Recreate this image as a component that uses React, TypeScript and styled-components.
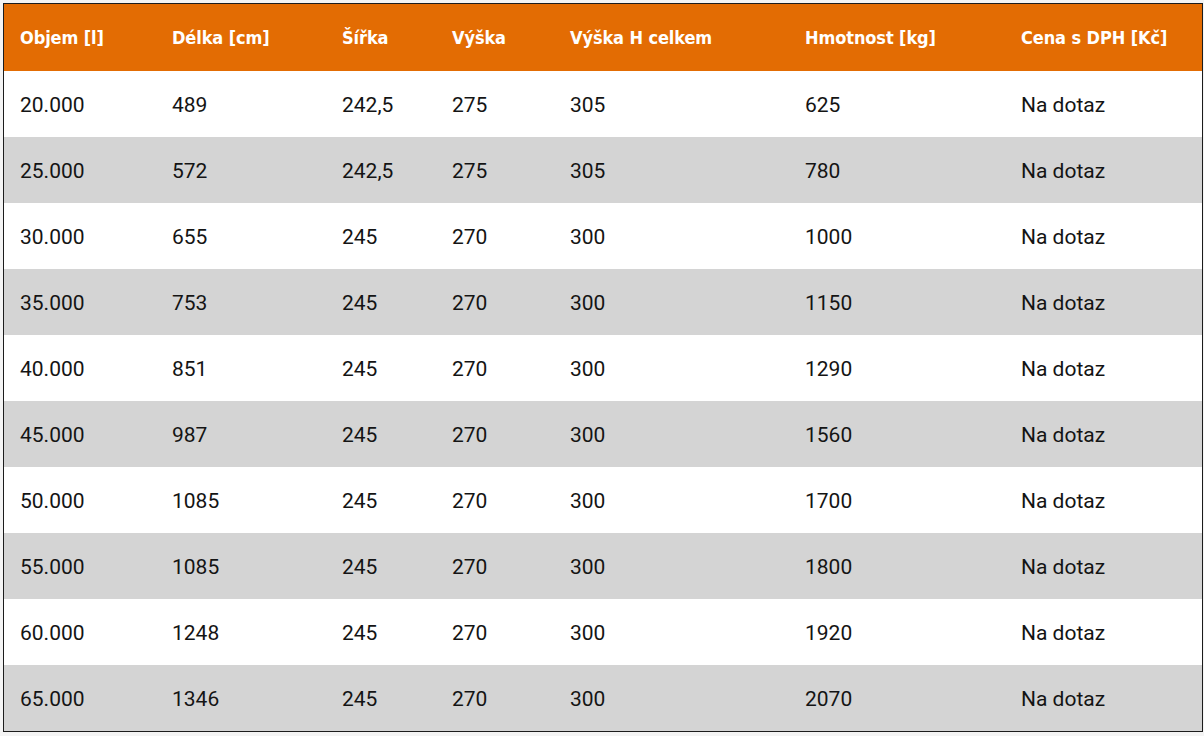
import React from "react";
import styled, { createGlobalStyle } from "styled-components";

const Global = createGlobalStyle`
  html, body { margin: 0; padding: 0; background: #f4f4f4; }
  body { padding: 3px 0 0 3px; }
`;

const Table = styled.table`
  width: 1200px;
  border-collapse: separate;
  border-spacing: 0;
  table-layout: fixed;
  border: 1px solid #1c1c1c;
  background: #ffffff;
`;

const HeadRow = styled.tr`
  height: 67px;
  background: #e36c03;
`;

const Th = styled.th`
  padding: 0 0 1px 16px;
  text-align: left;
  color: #ffffff;
  font-family: "DejaVu Sans Condensed", "DejaVu Sans", sans-serif;
  font-stretch: condensed;
  font-weight: 700;
  font-size: 18px;
  letter-spacing: -0.1px;
  white-space: nowrap;
`;

const Row = styled.tr<{ $shade: boolean }>`
  height: 66px;
  background: ${(p) => (p.$shade ? "#d4d4d4" : "#ffffff")};
`;

const Td = styled.td`
  padding: 2px 0 0 16px;
  color: #141414;
  font-family: Roboto, "Liberation Sans", sans-serif;
  font-size: 21px;
  font-weight: 400;
  white-space: nowrap;
`;

const widths = [152, 170, 110, 118, 235, 216, 197];
const headers = [
  "Objem [l]",
  "Délka [cm]",
  "Šířka",
  "Výška",
  "Výška H celkem",
  "Hmotnost [kg]",
  "Cena s DPH [Kč]",
];

const rows: string[][] = [
  ["20.000", "489", "242,5", "275", "305", "625"],
  ["25.000", "572", "242,5", "275", "305", "780"],
  ["30.000", "655", "245", "270", "300", "1000"],
  ["35.000", "753", "245", "270", "300", "1150"],
  ["40.000", "851", "245", "270", "300", "1290"],
  ["45.000", "987", "245", "270", "300", "1560"],
  ["50.000", "1085", "245", "270", "300", "1700"],
  ["55.000", "1085", "245", "270", "300", "1800"],
  ["60.000", "1248", "245", "270", "300", "1920"],
  ["65.000", "1346", "245", "270", "300", "2070"],
];

export default function App() {
  return (
    <>
      <Global />
      <Table>
        <colgroup>
          {widths.map((w, i) => (
            <col key={i} style={{ width: w }} />
          ))}
        </colgroup>
        <thead>
          <HeadRow>
            {headers.map((h) => (
              <Th key={h}>{h}</Th>
            ))}
          </HeadRow>
        </thead>
        <tbody>
          {rows.map((r, i) => (
            <Row key={i} $shade={i % 2 === 1}>
              {r.map((c, j) => (
                <Td key={j}>{c}</Td>
              ))}
              <Td>Na dotaz</Td>
            </Row>
          ))}
        </tbody>
      </Table>
    </>
  );
}
